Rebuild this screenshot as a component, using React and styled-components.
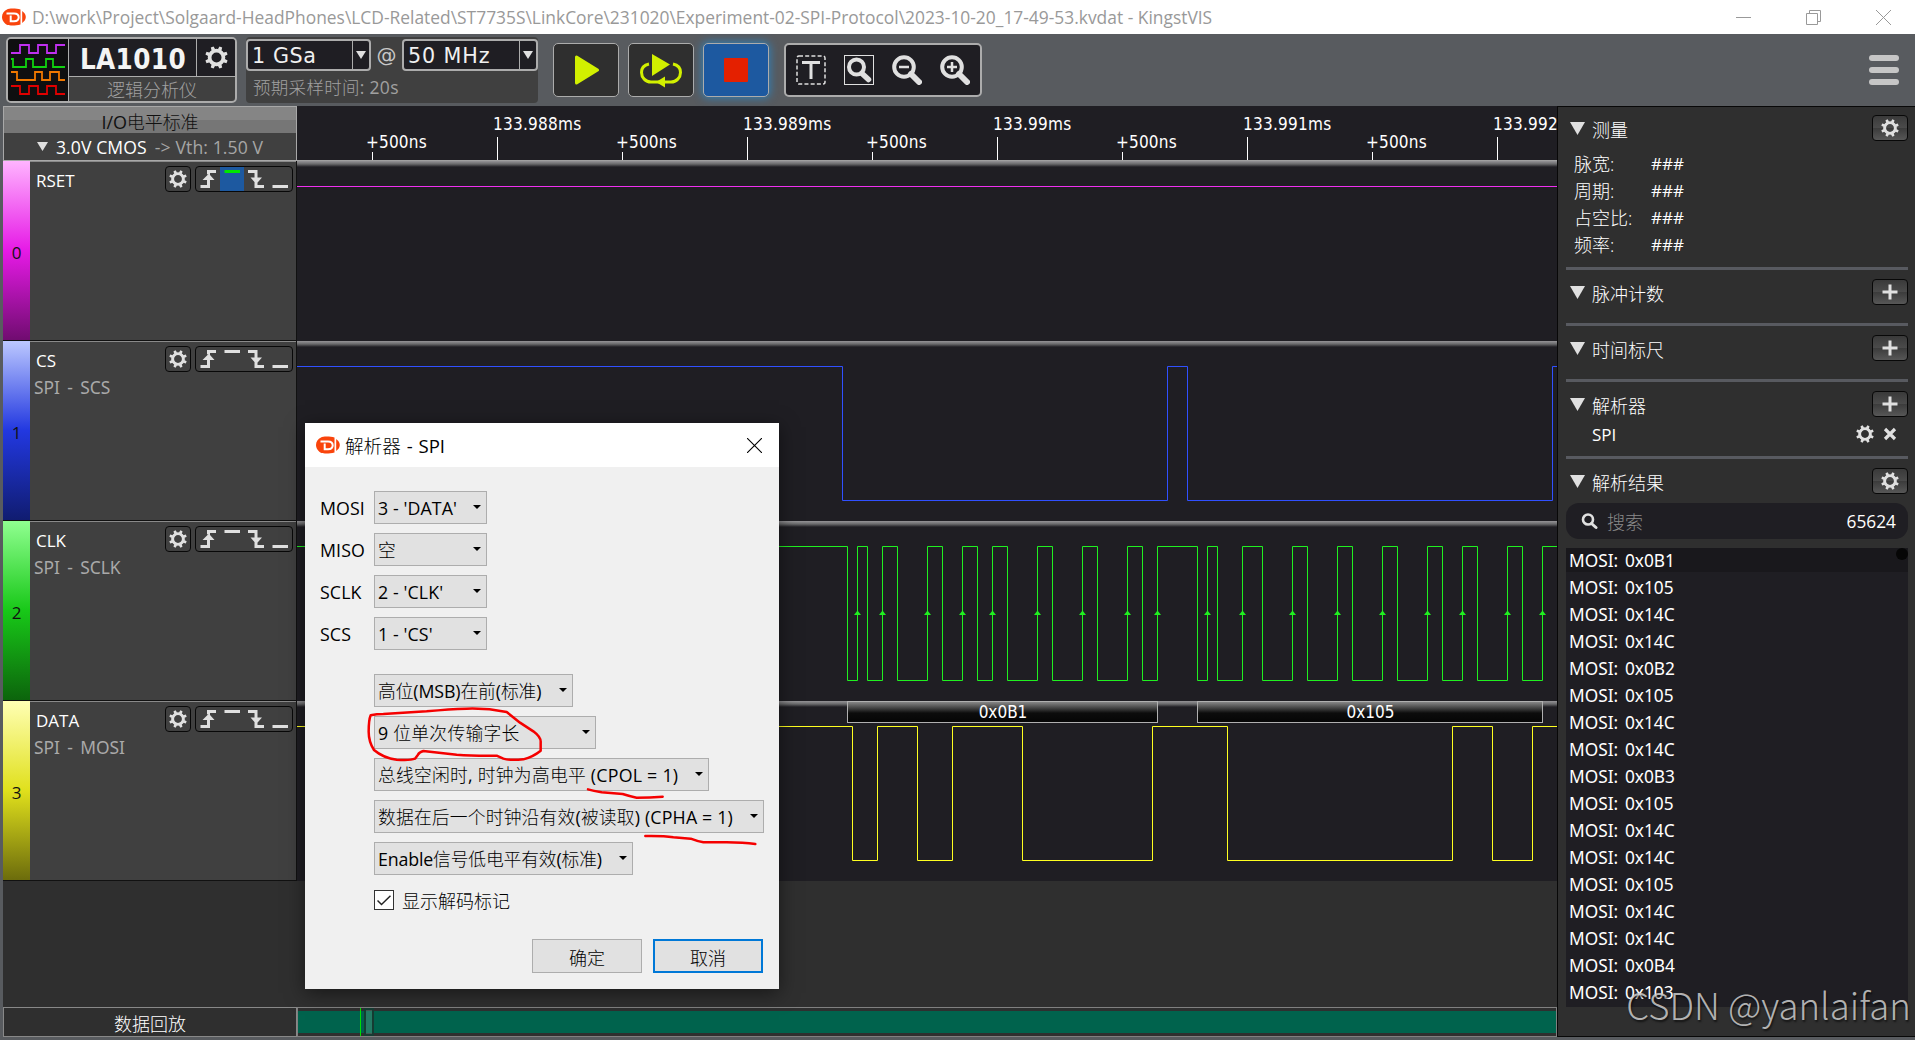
import styled, { createGlobalStyle, css } from 'styled-components';

const UI = '"Open Sans", "Noto Sans CJK SC", sans-serif';
const WIDE = '"DejaVu Sans", "Noto Sans CJK SC", sans-serif';
const NARROW = '"DejaVu Sans Condensed", "DejaVu Sans", sans-serif';
const DATA = '"Noto Sans", "Noto Sans CJK SC", sans-serif';

const GlobalStyle = createGlobalStyle`
  * { box-sizing: border-box; }
  body {
    margin: 0;
    background: #585b5f;
    overflow: hidden;
  }
  svg { display: block; flex: none; }
`;

const Window = styled.div`
  position: relative;
  width: 1915px;
  height: 1040px;
  display: flex;
  flex-direction: column;
  background: #585b5f;
  font-family: ${UI};
  font-size: 17px;
  line-height: 1;
  white-space: nowrap;
  overflow: hidden;
`;

/* ---------- title bar ---------- */

const TitleBar = styled.header`
  height: 34px;
  flex: none;
  display: flex;
  align-items: center;
  padding: 0 24px 0 2px;
  background: #fff;
  color: #999;
`;
const TitleText = styled.span`
  flex: 1;
  margin: 2px 0 0 6px;
  font-size: 17.4px;
`;
const WindowButtons = styled.div`
  display: flex;
  gap: 55px;
`;

/* ---------- toolbar ---------- */

const Toolbar = styled.div`
  height: 72px;
  flex: none;
  display: flex;
  align-items: flex-start;
  padding: 3px 16px 0 6px;
`;
const DeviceBox = styled.div`
  width: 231px;
  height: 66px;
  display: grid;
  grid-template-columns: 61px 1fr;
  border: 2px solid #acacac;
  border-radius: 5px;
  background: #404040;
  overflow: hidden;
`;
const DeviceIcon = styled.div`
  display: flex;
  align-items: center;
  justify-content: center;
  border-right: 1px solid #acacac;
  background: #0f0f10;
`;
const DeviceInfo = styled.div`
  display: grid;
  grid-template-rows: 38px 1fr;
`;
const DeviceTop = styled.div`
  display: grid;
  grid-template-columns: 128px 1fr;
  border-bottom: 1px solid #acacac;
  background: #1f1e23;
`;
const DeviceName = styled.div`
  display: flex;
  align-items: center;
  justify-content: center;
  padding: 4px 0 0 1px;
  border-right: 1px solid #acacac;
  color: #f4f4f4;
  font-family: ${NARROW};
  font-size: 27.5px;
  font-weight: bold;
  letter-spacing: 0.4px;
`;
const Centered = styled.div`
  display: flex;
  align-items: center;
  justify-content: center;
`;
const DeviceKind = styled(Centered)`
  padding-top: 1px;
  color: #a0a0a0;
  font-size: 18px;
  font-weight: 300;
`;
const SampleBox = styled.div`
  width: 292px;
  height: 66px;
  margin-left: 9px;
  padding-top: 2px;
  border-radius: 4px;
  background: #404040;
  color: #a0a0a0;
`;
const SampleRow = styled.div`
  display: flex;
  justify-content: space-between;
  align-items: center;
  color: #c8c8c8;
  font-family: ${WIDE};
  font-size: 20px;
`;
const DarkSelect = styled.div`
  width: ${({ $w }) => $w}px;
  height: 32px;
  display: grid;
  grid-template-columns: 1fr 17px;
  border: 2px solid #acacac;
  border-radius: 4px;
  background: #1f1e23;
  color: #f0f0f0;
  font-size: 20.7px;
  letter-spacing: ${({ $ls }) => $ls}px;
`;
const DarkValue = styled.div`
  display: flex;
  align-items: center;
  padding: 3px 0 0 4px;
`;
const DarkArrow = styled(Centered)`
  border-left: 1px solid #acacac;
`;
const SampleNote = styled.div`
  padding: 8px 0 0 7px;
  font-size: 17.5px;
  letter-spacing: 0.3px;
`;
const RunButtons = styled.div`
  display: flex;
  gap: 9px;
  margin: 6px 0 0 15px;
`;
const RunButton = styled.div`
  width: 66px;
  height: 54px;
  display: flex;
  align-items: center;
  justify-content: center;
  border: 1px solid #acacac;
  border-radius: 5px;
  background: #2f2f2f;
  ${({ $active }) =>
    $active &&
    css`
      background: #1d59a0;
      box-shadow: 0 0 9px 1px #2f7fb8;
    `}
`;
const ZoomBox = styled.div`
  width: 198px;
  height: 54px;
  margin: 6px 0 0 15px;
  display: flex;
  align-items: center;
  gap: 18px;
  padding-left: 10px;
  border: 2px solid #acacac;
  border-radius: 5px;
  background: #1f1e23;
`;
const MenuButton = styled.div`
  width: 30px;
  margin: 18px 0 0 auto;
  display: grid;
  gap: 6px;
`;
const MenuBar = styled.div`
  height: 6px;
  border-radius: 3px;
  background: #c6c6c6;
`;

/* ---------- workspace ---------- */

const Workspace = styled.div`
  height: 931px;
  display: grid;
  grid-template-columns: 1554px 1fr;
  padding-left: 3px;
`;
const Channels = styled.main`
  display: grid;
  grid-template-columns: 294px 1260px;
  grid-template-rows: 55px repeat(4, 180px) 1fr 30px;
  background: #2f2f2f;
`;
const LevelBox = styled.div`
  display: grid;
  grid-template-rows: 26px 1fr;
  border: 1px solid #a8a8a8;
  background: #404040;
  color: #fff;
`;
const LevelTitle = styled(Centered)`
  padding-top: 3px;
  background: linear-gradient(#858585 0 50%, #767676 50%);
  color: #111;
  font-size: 18px;
  letter-spacing: -0.1px;
`;
const LevelValue = styled(Centered)`
  gap: 8px;
  font-size: 17.6px;
  letter-spacing: 0.1px;
`;
const LevelText = styled.span`
  margin-top: 2px;
`;
const Dim = styled(LevelText)`
  color: #a6a6a6;
  letter-spacing: 0.1px;
`;
const ChannelHead = styled.div`
  display: grid;
  grid-template-columns: 27px 1fr;
  border-bottom: 1px solid #111;
  border-right: 1px solid #111;
  background: #404040;
`;
const Stripe = styled(Centered)`
  background: linear-gradient(${({ $colors }) => $colors});
  color: #111;
  font-size: 17px;
  padding-top: 4px;
`;
const ChannelInfo = styled.div`
  border-top: 1px solid #8a8a8a;
`;
const ChannelTop = styled.div`
  display: flex;
  align-items: center;
  height: 26px;
  margin: 4px 3px 0 6px;
  color: #fff;
  font-size: 17px;
`;
const ChannelName = styled.span`
  margin-top: 2px;
`;
const SmallButton = styled(Centered)`
  width: 26px;
  height: 26px;
  margin-left: auto;
  border: 1px solid #080808;
  border-radius: 4px;
`;
const TriggerBox = styled.div`
  width: 98px;
  height: 26px;
  margin-left: 4px;
  border: 1px solid #080808;
  border-radius: 4px;
`;
const Protocol = styled.div`
  margin: 7px 0 0 4px;
  color: #a9a9a9;
  font-family: ${DATA};
  font-size: 17.4px;
  word-spacing: 2.8px;
`;
const Ruler = styled.div`
  background: #1f1e23;
  border-bottom: 1px solid #a0a0a0;
  overflow: hidden;
`;
const Lane = styled.div`
  display: flex;
  background: linear-gradient(#959497 0, #6a6a6c 3px, #1f1e23 6px);
`;
const Filler = styled.div`
  grid-column: 1 / -1;
`;
const ReplayTitle = styled(Centered)`
  padding-top: 3px;
  border: 1px solid #888;
  color: #fff;
  font-size: 18px;
  font-weight: 300;
`;
const ReplayBar = styled.div`
  display: flex;
  border: 1px solid #808080;
  background: linear-gradient(#2f2f2f 3px, #00634d 3px 25px, #2f2f2f 25px);
`;
const ReplayCursor = styled.div`
  width: 1px;
  margin-left: 62px;
  background: #00e000;
`;
const ReplayHandle = styled.div`
  width: 10px;
  margin-left: 3px;
  border: 2px solid #163c33;
  background: rgba(120, 180, 160, 0.3);
`;

/* ---------- side panel ---------- */

const SidePanel = styled.aside`
  display: flex;
  flex-direction: column;
  padding: 8px 7px 29px 8px;
  border: solid #080808;
  border-width: 1px 0 1px 1px;
  background: #2f2f2f;
  color: #fff;
`;
const Section = styled.section`
  height: ${({ $h }) => $h}px;
  flex: none;
  margin-bottom: 9px;
  border-bottom: 3px solid #585a60;
`;
const SectionHead = styled.div`
  display: flex;
  align-items: center;
  height: 26px;
  padding-left: 4px;
  font-size: 18px;
  font-weight: 300;
`;
const SectionTitle = styled.span`
  margin: 3px 0 0 7px;
`;
const RaisedButton = styled(Centered)`
  width: 36px;
  height: 26px;
  margin-left: auto;
  border: 1px solid #080808;
  border-radius: 4px;
  background: linear-gradient(#3a3a3a, #4b4b4b 50%, #3b3b3b 50%, #575757);
`;
const Measures = styled.dl`
  display: grid;
  grid-template-columns: 77px 1fr;
  grid-auto-rows: 27px;
  align-items: center;
  margin: 9px 0 0 8px;
  font-size: 18px;
  font-weight: 300;
`;
const MeasureLabel = styled.dt`
  margin: 0;
`;
const MeasureValue = styled.dd`
  margin: 0;
  font-size: 17px;
  font-weight: 400;
`;
const ParserRow = styled.div`
  display: flex;
  align-items: center;
  height: 30px;
  margin-top: 2px;
  padding: 0 9px 0 26px;
  gap: 7px;
`;
const ParserName = styled.span`
  flex: 1;
  margin-top: 1px;
`;
const Search = styled.div`
  display: flex;
  align-items: center;
  height: 36px;
  flex: none;
  margin: 9px 0;
  padding: 0 12px 0 15px;
  border-radius: 13px;
  background: #1f1e23;
`;
const Placeholder = styled.span`
  flex: 1;
  margin: 2px 0 0 9px;
  color: #8a8a8a;
  font-size: 18px;
  font-weight: 300;
`;
const Count = styled.span`
  margin-top: 1px;
  font-size: 17.3px;
`;
const Results = styled.div`
  position: relative;
  flex: 1;
  background: #1f1e23;
  overflow: hidden;
`;
const Result = styled.div`
  height: 27px;
  padding: 4px 0 0 3px;
  background: ${({ $first }) =>
    $first ? 'linear-gradient(#19181c 24px, transparent 24px)' : 'none'};
  font-family: ${DATA};
  font-size: 17.3px;
  word-spacing: 2.3px;
`;
const ScrollDot = styled.div`
  position: absolute;
  top: 0;
  right: 0;
  width: 12px;
  height: 12px;
  border-radius: 50%;
  background: #060606;
`;

/* ---------- dialog ---------- */

const Dialog = styled.div`
  position: absolute;
  left: 305px;
  top: 423px;
  width: 474px;
  height: 566px;
  background: #f0f0f0;
  color: #000;
  box-shadow: 0 4px 18px rgba(0, 0, 0, 0.5);
`;
const DialogTitle = styled.div`
  display: flex;
  align-items: center;
  height: 44px;
  padding: 0 17px 0 11px;
  background: #fff;
`;
const DialogName = styled.span`
  flex: 1;
  margin: 2px 0 0 5px;
  font-size: 18.6px;
  word-spacing: 1px;
`;
const Form = styled.div`
  display: grid;
  grid-template-columns: 54px 1fr;
  row-gap: 9px;
  align-items: center;
  padding: 24px 0 0 15px;
`;
const Options = styled.div`
  display: grid;
  row-gap: 9px;
  margin: 24px 0 0 69px;
`;
const Select = styled.div`
  display: flex;
  align-items: center;
  justify-content: space-between;
  width: ${({ $w }) => $w}px;
  height: 33px;
  padding: 3px 5px 0 3px;
  border: 1px solid #adadad;
  background: #e1e1e1;
  font-size: 17.8px;
  letter-spacing: ${({ $ls }) => $ls || 0}px;

  svg {
    margin-top: -4px;
  }
`;
const Han = styled.span`
  font-weight: 300;
`;
const FormLabel = styled.span`
  margin-top: 2px;
  font-size: 17.8px;
  letter-spacing: 0.1px;
`;
const CheckRow = styled.div`
  display: flex;
  align-items: center;
  margin: 15px 0 0 69px;
  gap: 8px;
  font-size: 18px;
  font-weight: 300;
`;
const CheckLabel = styled.span`
  margin-top: 2px;
`;
const Checkbox = styled(Centered)`
  width: 20px;
  height: 20px;
  border: 1px solid #333;
  background: #fff;
`;
const DialogButtons = styled.div`
  display: flex;
  justify-content: flex-end;
  gap: 11px;
  margin: 29px 16px 0 0;
`;
const DialogButton = styled(Centered)`
  width: 110px;
  height: 34px;
  padding-top: 3px;
  border: ${({ $focus }) => ($focus ? '2px solid #0078d7' : '1px solid #adadad')};
  background: #e1e1e1;
  font-size: 18px;
  font-weight: 300;
`;

const Marks = styled.svg`
  position: absolute;
  left: 300px;
  top: 700px;
  pointer-events: none;
`;
const Watermark = styled.div`
  position: absolute;
  right: 4px;
  bottom: 16px;
  color: rgba(205, 205, 205, 0.85);
  font-family: "Noto Sans CJK SC", sans-serif;
  font-size: 36.6px;
  font-weight: 300;
  text-shadow: 1px 2px 2px rgba(0, 0, 0, 0.6);
`;

/* ---------- icons ---------- */

const Logo = () => (
  <svg width="24" height="18" viewBox="0 0 24 18">
    <path d="M5 1.500C7 .3 14 .3 18.500 1.500V16.500C14 17.700 8 17.700 5.500 17 2.500 15.700 0 12.500 0 9c0-3.500 2-6.300 5-7.500Z" fill="#f9440c" />
    <path d="M4.500 5.400H12c3.300 0 4.700 1.500 4.700 3.900s-1.400 4-4.700 4H8.700V7.500" fill="none" stroke="#fff" strokeWidth="2" />
    <path d="M20.200 3c4.800 3.500 4.800 8.500 0 12Z" fill="#f9440c" />
  </svg>
);

const teeth = [22.5, 67.5, 112.5, 157.5, 202.5, 247.5, 292.5, 337.5];
const Gear = ({ size = 18 }) => (
  <svg width={size} height={size} viewBox="0 0 22 22">
    <circle cx="11" cy="11" r="6.600" fill="none" stroke="#e0e0e0" strokeWidth="3.600" />
    {teeth.map((a) => (
      <path key={a} d="M9.100 3.500 9.600.1h2.800l.5 3.400Z" fill="#e0e0e0" transform={`rotate(${a} 11 11)`} />
    ))}
  </svg>
);

const Down = ({ w = 11, h = 9, fill = '#e0e0e0' }) => (
  <svg width={w} height={h} viewBox="0 0 10 10" preserveAspectRatio="none">
    <path d="M0 0h10L5 10Z" fill={fill} />
  </svg>
);

const Plus = () => (
  <svg width="16" height="16" viewBox="0 0 16 16">
    <path d="M8 .5v15M.5 8h15" stroke="#e0e0e0" strokeWidth="3" />
  </svg>
);

const DeviceWaves = () => (
  <svg width="54" height="52" viewBox="0 0 54 52" fill="none" strokeWidth="1.800">
    <path d="M0 9h9V1h9v8h9V1h9v8h9V1h9" stroke="#c030f0" />
    <path d="M0 15h2v8h13v-8h7v8h13v-8h7v8h12" stroke="#10d010" />
    <path d="M0 28h6v8h18v-8h7v8h8v-8h9v8h6" stroke="#f07800" />
    <path d="M0 42h9v8h9v-8h9v8h9v-8h9v8h9" stroke="#e00000" />
  </svg>
);

const Lens = ({ sign }) => (
  <svg width="30" height="30" viewBox="0 0 30 30" fill="none" stroke="#e0e0e0">
    <circle cx="12" cy="12" r="9.800" strokeWidth="4" />
    <path d="m19 19 8 8" strokeWidth="6" strokeLinecap="round" />
    <path d={sign} strokeWidth="2.500" />
  </svg>
);

const Trigger = ({ high }) => (
  <svg width="96" height="24" viewBox="1 1 96 24" fill="#e0e0e0">
    {high && <path d="M25 1h24v24H25Z" fill="#1d59a0" />}
    <path d="M5.500 19H12v-5H7.500L13.500 8l-1.500.5V4h9v3h-6v2l4.500 5H15v8H5.500Z" />
    <path d="M29.500 4H45v3H29.500Z" fill={high ? '#00e600' : '#e0e0e0'} />
    <path d="M53 4h9.500v7.500H67L61.300 18 55.500 11.500h4V7H53Zm6.500 12h3v3H69v3h-9.500Z" />
    <path d="M77.500 19H93v3H77.500Z" />
  </svg>
);

/* ---------- data ---------- */

const channels = [
  {
    id: 0, name: 'RSET', high: true, stroke: '#f030f0',
    colors: '#ffb4ff, #e61ae6 50%, #700c70', edges: [],
  },
  {
    id: 1, name: 'CS', protocol: 'SPI - SCS', stroke: '#3050ff',
    colors: '#bcc8ff, #2238e0 50%, #101c70', edges: [842, 1167, 1187, 1552],
  },
  {
    id: 2, name: 'CLK', protocol: 'SPI - SCLK', stroke: '#20f020', arrows: true,
    colors: '#90ff90, #18c818 50%, #0c640c',
    edges: [
      847, 857, 867, 882, 897, 927, 942, 962, 977, 992, 1007, 1037, 1052, 1082, 1097, 1127, 1142, 1157,
      1197, 1207, 1217, 1242, 1262, 1292, 1307, 1337, 1352, 1382, 1397, 1427, 1442, 1462, 1477, 1507, 1522, 1542,
    ],
  },
  {
    id: 3, name: 'DATA', protocol: 'SPI - MOSI', stroke: '#ffff20',
    colors: '#ffffb4, #e0e01c 50%, #6c6c0c',
    edges: [852, 877, 917, 952, 1022, 1152, 1227, 1452, 1492, 1532],
    tags: [[847, 1157, '0x0B1'], [1197, 1542, '0x105']],
  },
];

const LEFT = 297;
const HIGH = 25.5;
const LOW = 159.5;

const tracePath = (edges) => {
  let d = `M0 ${HIGH}`;
  edges.forEach((x, i) => {
    d += `H${x - LEFT + 0.5}V${i % 2 ? HIGH : LOW}`;
  });
  return `${d}H1260`;
};

const ruler = ['133.988ms', '133.989ms', '133.99ms', '133.991ms', '133.992'];

const results = [
  '0x0B1', '0x105', '0x14C', '0x14C', '0x0B2', '0x105', '0x14C', '0x14C', '0x0B3',
  '0x105', '0x14C', '0x14C', '0x105', '0x14C', '0x14C', '0x0B4', '0x103',
];

const measures = ['脉宽:', '周期:', '占空比:', '频率:'];

const pins = [
  ['MOSI', "3 - 'DATA'"],
  ['MISO', '空'],
  ['SCLK', "2 - 'CLK'"],
  ['SCS', "1 - 'CS'"],
];

// label, width, letter spacing
const options = [
  ['高位(MSB)在前(标准)', 199, -0.12],
  ['9 位单次传输字长', 222, 0.25],
  ['总线空闲时, 时钟为高电平 (CPOL = 1)', 335, 0.24],
  ['数据在后一个时钟沿有效(被读取) (CPHA = 1)', 390, 0.17],
  ['Enable信号低电平有效(标准)', 259, -0.16],
];

// Chinese runs are set lighter than the latin text around them
const Mixed = ({ children }) => (
  <span>
    {children.split(/([\u4e00-\u9fff]+)/).map((part, i) => (i % 2 ? <Han key={i}>{part}</Han> : part))}
  </span>
);

const Trace = ({ channel }) => (
  <Lane>
    <svg width="1260" height="180">
      <defs>
        <linearGradient id="tag" x2="0" y2="1">
          <stop offset="0" stopColor="#8c8c8c" />
          <stop offset="0.55" stopColor="#0c0c0c" />
          <stop offset="1" stopColor="#050505" />
        </linearGradient>
      </defs>
      {channel.tags?.map(([from, to, label]) => (
        <g key={label}>
          <rect x={from - LEFT + 0.5} y="0.5" width={to - from} height="21" fill="url(#tag)" stroke="#b0b0b0" />
          <text x={(from + to) / 2 - LEFT + 1} y="17" fill="#fff" fontFamily={NARROW} fontSize="17" textAnchor="middle">
            {label}
          </text>
        </g>
      ))}
      <path d={tracePath(channel.edges)} fill="none" stroke={channel.stroke} />
      {channel.arrows &&
        channel.edges
          .filter((_, i) => i % 2)
          .map((x) => <path key={x} d={`M${x - LEFT - 3} 94h7l-3.500-4.500Z`} fill={channel.stroke} />)}
    </svg>
  </Lane>
);

const Head = ({ channel }) => (
  <ChannelHead>
    <Stripe $colors={channel.colors}>{channel.id}</Stripe>
    <ChannelInfo>
      <ChannelTop>
        <ChannelName>{channel.name}</ChannelName>
        <SmallButton><Gear /></SmallButton>
        <TriggerBox><Trigger high={channel.high} /></TriggerBox>
      </ChannelTop>
      <Protocol>{channel.protocol}</Protocol>
    </ChannelInfo>
  </ChannelHead>
);

const SectionBar = ({ title, icon }) => (
  <SectionHead>
    <Down w={15} h={13} />
    <SectionTitle>{title}</SectionTitle>
    <RaisedButton>{icon}</RaisedButton>
  </SectionHead>
);

const TopBar = () => (
  <Toolbar>
    <DeviceBox>
      <DeviceIcon><DeviceWaves /></DeviceIcon>
      <DeviceInfo>
        <DeviceTop>
          <DeviceName>LA1010</DeviceName>
          <Centered><Gear size={23} /></Centered>
        </DeviceTop>
        <DeviceKind>逻辑分析仪</DeviceKind>
      </DeviceInfo>
    </DeviceBox>
    <SampleBox>
      <SampleRow>
        <DarkSelect $w={125} $ls={0.6}>
          <DarkValue>1 GSa</DarkValue>
          <DarkArrow><Down w={10} h={8} /></DarkArrow>
        </DarkSelect>
        @
        <DarkSelect $w={136} $ls={0.9}>
          <DarkValue>50 MHz</DarkValue>
          <DarkArrow><Down w={10} h={8} /></DarkArrow>
        </DarkSelect>
      </SampleRow>
      <SampleNote><Mixed>预期采样时间: 20s</Mixed></SampleNote>
    </SampleBox>
    <RunButtons>
      <RunButton>
        <svg width="26" height="30" viewBox="0 0 26 30">
          <path d="M3.500 2v26L24.500 15Z" fill="#d2f000" stroke="#d2f000" strokeWidth="3" strokeLinejoin="round" />
        </svg>
      </RunButton>
      <RunButton>
        <svg width="42" height="36" viewBox="0 0 42 36">
          <path d="M12 2v22L30 12.500Z" fill="#d2f000" />
          <path d="M9 12C4 13 1.500 16.500 1.500 20.500c0 5 4 9.500 9.500 9.500h20c5.500 0 9.500-4.500 9.500-9.500 0-4-2.500-7.500-7.500-8.500" fill="none" stroke="#d2f000" strokeWidth="3" />
          <path d="m16 30 9-5.500V35.500Z" fill="#d2f000" />
        </svg>
      </RunButton>
      <RunButton $active>
        <svg width="24" height="24">
          <rect width="24" height="24" rx="1" fill="#e42000" />
        </svg>
      </RunButton>
    </RunButtons>
    <ZoomBox>
      <svg width="30" height="30" viewBox="0 0 30 30" fill="none" stroke="#e0e0e0">
        <rect x="1" y="1" width="28" height="28" rx="2" strokeWidth="1.500" strokeDasharray="4 2.200" />
        <path d="M6 7.500h18" strokeWidth="3" />
        <path d="M15 7v17" strokeWidth="3" />
      </svg>
      <svg width="30" height="30" viewBox="0 0 30 30" fill="none" stroke="#e0e0e0">
        <rect x=".5" y=".5" width="29" height="29" />
        <circle cx="12.500" cy="12" r="7.500" strokeWidth="4" />
        <path d="m18 18.500 6.500 6" strokeWidth="5.500" strokeLinecap="round" />
      </svg>
      <Lens sign="M7 12h10" />
      <Lens sign="M7 12h10M12 7v10" />
    </ZoomBox>
    <MenuButton>
      <MenuBar />
      <MenuBar />
      <MenuBar />
    </MenuButton>
  </Toolbar>
);

const ParserDialog = () => (
  <Dialog>
    <DialogTitle>
      <Logo />
      <DialogName><Mixed>解析器 - SPI</Mixed></DialogName>
      <svg width="15" height="15" viewBox="0 0 15 15">
        <path d="m0 0 15 15M15 0 0 15" stroke="#000" strokeWidth="1.100" />
      </svg>
    </DialogTitle>
    <Form>
      {pins.map(([label, value]) => [
        <FormLabel key={label}>{label}</FormLabel>,
        <Select key={value} $w={113} $ls={0.1}>
          <Mixed>{value}</Mixed>
          <Down w={8} h={4} fill="#000" />
        </Select>,
      ])}
    </Form>
    <Options>
      {options.map(([label, w, ls]) => (
        <Select key={label} $w={w} $ls={ls}>
          <Mixed>{label}</Mixed>
          <Down w={8} h={4} fill="#000" />
        </Select>
      ))}
    </Options>
    <CheckRow>
      <Checkbox>
        <svg width="14" height="11" viewBox="0 0 14 11" fill="none">
          <path d="m.5 5.500 4 4L13.500.8" stroke="#222" strokeWidth="1.500" />
        </svg>
      </Checkbox>
      <CheckLabel>显示解码标记</CheckLabel>
    </CheckRow>
    <DialogButtons>
      <DialogButton>确定</DialogButton>
      <DialogButton $focus>取消</DialogButton>
    </DialogButtons>
  </Dialog>
);

const Panel = () => (
  <SidePanel>
    <Section $h={155}>
      <SectionBar title="测量" icon={<Gear />} />
      <Measures>
        {measures.map((label) => [
          <MeasureLabel key={label}>{label}</MeasureLabel>,
          <MeasureValue key={`${label}value`}>###</MeasureValue>,
        ])}
      </Measures>
    </Section>
    <Section $h={47}>
      <SectionBar title="脉冲计数" icon={<Plus />} />
    </Section>
    <Section $h={47}>
      <SectionBar title="时间标尺" icon={<Plus />} />
    </Section>
    <Section $h={68}>
      <SectionBar title="解析器" icon={<Plus />} />
      <ParserRow>
        <ParserName>SPI</ParserName>
        <Gear />
        <svg width="18" height="14" viewBox="0 0 18 14">
          <path d="m4 2 10 10M14 2 4 12" stroke="#e0e0e0" strokeWidth="3.200" />
        </svg>
      </ParserRow>
    </Section>
    <SectionBar title="解析结果" icon={<Gear />} />
    <Search>
      <svg width="17" height="17" viewBox="0 0 17 17" fill="none" stroke="#e0e0e0">
        <circle cx="7" cy="6.500" r="5" strokeWidth="2.600" />
        <path d="m10.500 10.500 4.500 4" strokeWidth="3" strokeLinecap="round" />
      </svg>
      <Placeholder>搜索</Placeholder>
      <Count>65624</Count>
    </Search>
    <Results>
      {results.map((value, i) => (
        <Result key={i} $first={i === 0}>MOSI: {value}</Result>
      ))}
      <ScrollDot />
    </Results>
  </SidePanel>
);

const App = () => {
  return (
    <Window>
      <GlobalStyle />
      <TitleBar>
        <Logo />
        <TitleText>
          D:\work\Project\Solgaard-HeadPhones\LCD-Related\ST7735S\LinkCore\231020\Experiment-02-SPI-Protocol\2023-10-20_17-49-53.kvdat - KingstVIS
        </TitleText>
        <WindowButtons>
          <svg width="15" height="15"><path d="M0 7.500h15" stroke="#999" /></svg>
          <svg width="15" height="15" fill="none" stroke="#999">
            <path d="M.5 3.500h11v11H.5ZM3.500 3.500v-3h11v11h-3" />
          </svg>
          <svg width="15" height="15"><path d="m0 0 15 15M15 0 0 15" stroke="#999" /></svg>
        </WindowButtons>
      </TitleBar>
      <TopBar />
      <Workspace>
        <Channels>
          <LevelBox>
            <LevelTitle><Mixed>I/O电平标准</Mixed></LevelTitle>
            <LevelValue>
              <Down />
              <LevelText>3.0V CMOS</LevelText>
              <Dim>-&gt; Vth: 1.50 V</Dim>
            </LevelValue>
          </LevelBox>
          <Ruler>
            <svg width="1260" height="54" fill="#fff" fontFamily={NARROW} fontSize="17">
              {ruler.map((label, i) => (
                <g key={label} transform={`translate(${i * 250} 0)`}>
                  <text x="69" y="42" letterSpacing="0.200">+500ns</text>
                  <path d="M75 46h1v8h-1ZM200 31h1v23h-1Z" />
                  <text x="196" y="24" letterSpacing="0.250">{label}</text>
                </g>
              ))}
            </svg>
          </Ruler>
          {channels.map((channel) => [
            <Head key={channel.name} channel={channel} />,
            <Trace key={channel.id} channel={channel} />,
          ])}
          <Filler />
          <ReplayTitle>数据回放</ReplayTitle>
          <ReplayBar>
            <ReplayCursor />
            <ReplayHandle />
          </ReplayBar>
        </Channels>
        <Panel />
      </Workspace>
      <ParserDialog />
      <Marks width="490" height="160" viewBox="0 0 1470 480" fill="none" stroke="#f50000" strokeWidth="7.500" strokeLinecap="round" strokeLinejoin="round">
        <path d="M212 46Q230 42 250 42L380 34Q450 27 500 26 560 24 620 36L660 68 700 94Q724 112 722 128V152Q700 170 670 178 630 182 610 176L590 167Q520 168 470 164L370 153Q358 156 354 164L345 176Q330 182 290 179 250 174 222 150 206 125 206 95 206 60 212 46" />
        <path d="M864 268Q880 273 905 277L968 282Q990 289 1010 293 1050 293 1088 290" />
        <path d="M1036 408Q1090 407 1120 412L1172 416Q1190 423 1210 427H1280Q1330 427 1366 432" />
      </Marks>
      <Watermark>CSDN @yanlaifan</Watermark>
    </Window>
  );
};

export default App;
